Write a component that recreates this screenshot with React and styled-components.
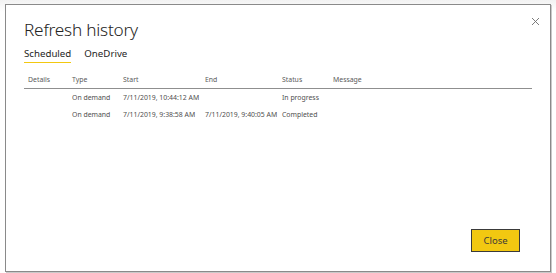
import React from "react";
import styled, { createGlobalStyle } from "styled-components";

const Global = createGlobalStyle`
  html, body { margin: 0; padding: 0; background: #ffffff; }
  body { font-family: "Noto Sans", "Open Sans", sans-serif; color: #252423; }
`;

const Page = styled.div`
  width: 556px;
  height: 273px;
  overflow: hidden;
  box-sizing: border-box;
  padding: 4px 0 0 5px;
  background: linear-gradient(to bottom, #f2f2f2 0px, #ffffff 12px);
`;

const Dialog = styled.div`
  width: 546px;
  height: 268px;
  box-sizing: border-box;
  background: #ffffff;
  border: 1px solid #8a8a8a;
  box-shadow: 1px 1px 0 #c9c9c9;
  display: flex;
  flex-direction: column;
  padding: 0 18px 0 18px;
`;

const Header = styled.div`
  display: flex;
  justify-content: space-between;
  align-items: flex-start;
  padding-top: 13px;
`;

const Title = styled.h1`
  margin: 0;
  font-weight: 300;
  font-size: 17.2px;
  line-height: 24px;
  letter-spacing: -0.2px;
  color: #252423;
`;

const CloseX = styled.button`
  border: 0;
  background: none;
  padding: 0;
  margin: -1px -8px 0 0;
  width: 9px;
  height: 9px;
  display: flex;
  cursor: pointer;
`;

const Tabs = styled.div`
  display: flex;
  gap: 13px;
  margin-top: 5px;
`;

const Tab = styled.div`
  font-size: 9.7px;
  line-height: 14px;
  padding-bottom: 1px;
  color: #252423;
  border-bottom: 1.5px solid ${(p) => (p.$active ? "#f2c811" : "transparent")};
`;

const Table = styled.div`
  margin-top: 11px;
  display: grid;
  grid-template-columns: 48px 51px 82px 77px 51px 1fr;
  font-size: 6.9px;
  color: #4f4f4f;
`;

const HeadCell = styled.div`
  padding-left: ${(p) => (p.$first ? "4px" : "0")};
  line-height: 12px;
  padding-bottom: 2px;
  border-bottom: 1.5px solid #8f8f8f;
  color: #5a5a5a;
`;

const Cell = styled.div`
  line-height: 17px;
  white-space: nowrap;
`;

const Spacer = styled.div`
  flex: 1;
`;

const Footer = styled.div`
  display: flex;
  justify-content: flex-end;
  padding: 0 12px 19px 0;
`;

const CloseButton = styled.button`
  width: 49px;
  height: 23px;
  box-sizing: border-box;
  background: #f2c811;
  border: 1.5px solid #3a3a3a;
  font-family: "Noto Sans", "Open Sans", sans-serif;
  font-size: 9.5px;
  color: #3b3a39;
  padding: 0;
  cursor: pointer;
`;

const columns = ["Details", "Type", "Start", "End", "Status", "Message"];
const rows = [
  ["", "On demand", "7/11/2019, 10:44:12 AM", "", "In progress", ""],
  ["", "On demand", "7/11/2019, 9:38:58 AM", "7/11/2019, 9:40:05 AM", "Completed", ""],
];

export default function App() {
  return (
    <>
      <Global />
      <Page>
        <Dialog>
          <Header>
            <Title>Refresh history</Title>
            <CloseX aria-label="Close">
              <svg width="9" height="9" viewBox="0 0 9 9">
                <path d="M1 1 L8 8 M8 1 L1 8" stroke="#6e6e6e" strokeWidth="0.9" fill="none" />
              </svg>
            </CloseX>
          </Header>
          <Tabs>
            <Tab $active>Scheduled</Tab>
            <Tab>OneDrive</Tab>
          </Tabs>
          <Table>
            {columns.map((c, i) => (
              <HeadCell key={c} $first={i === 0}>{c}</HeadCell>
            ))}
            {rows.map((r, ri) =>
              r.map((v, ci) => <Cell key={`${ri}-${ci}`}>{v}</Cell>)
            )}
          </Table>
          <Spacer />
          <Footer>
            <CloseButton>Close</CloseButton>
          </Footer>
        </Dialog>
      </Page>
    </>
  );
}
